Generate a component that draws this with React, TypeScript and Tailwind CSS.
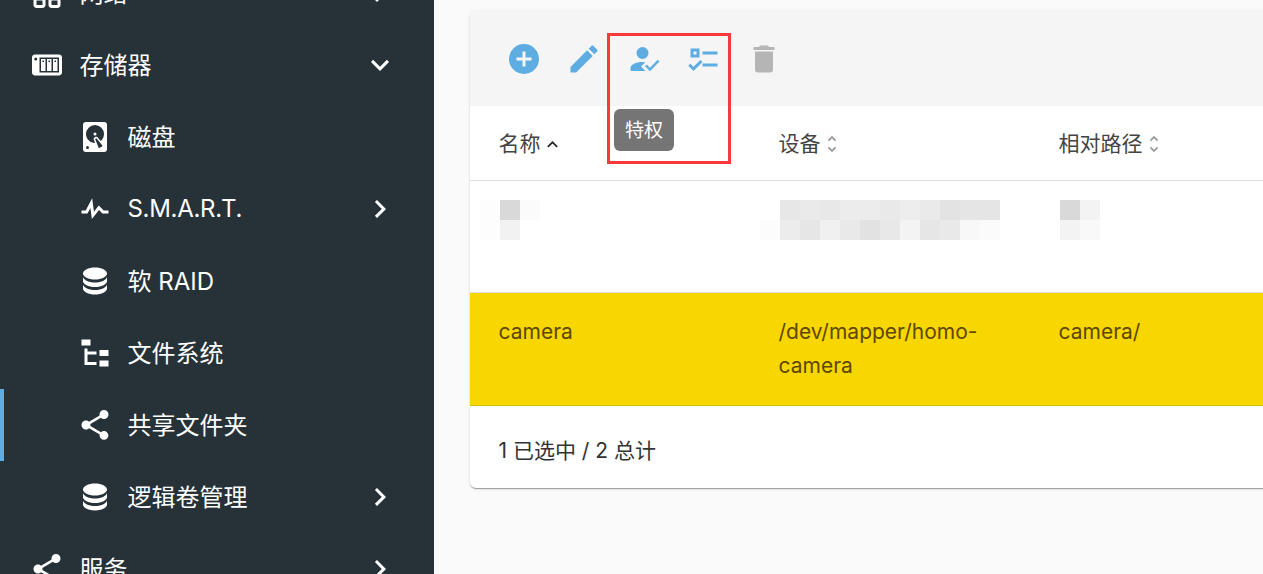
const P = {
  lan: "M10,2C8.89,2 8,2.89 8,4V7C8,8.11 8.89,9 10,9H11V11H2V13H6V15H5C3.89,15 3,15.89 3,17V20C3,21.11 3.89,22 5,22H9C10.11,22 11,21.11 11,20V17C11,15.89 10.11,15 9,15H8V13H16V15H15C13.89,15 13,15.89 13,17V20C13,21.11 13.89,22 15,22H19C20.11,22 21,21.11 21,20V17C21,15.89 20.11,15 19,15H18V13H22V11H13V9H14C15.11,9 16,8.11 16,7V4C16,2.89 15.11,2 14,2H10M10,4H14V7H10V4M5,17H9V20H5V17M15,17H19V20H15V17Z",
  nas: "M4,5C2.89,5 2,5.89 2,7V17C2,18.11 2.89,19 4,19H20C21.11,19 22,18.11 22,17V7C22,5.89 21.11,5 20,5H4M4.5,7A1,1 0 0,1 5.5,8A1,1 0 0,1 4.5,9A1,1 0 0,1 3.5,8A1,1 0 0,1 4.5,7M7,7H20V17H7V7M8,8V16H11V8H8M12,8V16H15V8H12M16,8V16H19V8H16M9,9H10V10H9V9M13,9H14V10H13V9M17,9H18V10H17V9Z",
  disk: "M6,2H18A2,2 0 0,1 20,4V20A2,2 0 0,1 18,22H6A2,2 0 0,1 4,20V4A2,2 0 0,1 6,2M12,4A6,6 0 0,0 6,10C6,13.31 8.69,16 12.1,16L11.22,13.77C10.95,13.29 11.11,12.68 11.59,12.4L12.45,11.9C12.93,11.63 13.54,11.79 13.82,12.27L15.74,14.69C17.12,13.59 18,11.9 18,10A6,6 0 0,0 12,4M12,9A1,1 0 0,1 13,10A1,1 0 0,1 12,11A1,1 0 0,1 11,10A1,1 0 0,1 12,9M7,18A1,1 0 0,0 6,19A1,1 0 0,0 7,20A1,1 0 0,0 8,19A1,1 0 0,0 7,18M12.09,13.27L14.58,19.58L17.17,18.08L12.95,12.77L12.09,13.27Z",
  pulse: "M3,13H5.79L10.1,4.79L11.28,13.75L14.5,9.66L17.83,13H21V15H17L14.67,12.67L9.92,18.73L8.94,11.31L7,15H3V13Z",
  db: "M12,3C7.58,3 4,4.79 4,7C4,9.21 7.58,11 12,11C16.42,11 20,9.21 20,7C20,4.79 16.42,3 12,3M4,9V12C4,14.21 7.58,16 12,16C16.42,16 20,14.21 20,12V9C20,11.21 16.42,13 12,13C7.58,13 4,11.21 4,9M4,14V17C4,19.21 7.58,21 12,21C16.42,21 20,19.21 20,17V14C20,16.21 16.42,18 12,18C7.58,18 4,16.21 4,14Z",
  tree: "M3,3H9V7H3V3M15,10H21V14H15V10M15,17H21V21H15V17M13,13H7V18H13V20H7L5,20V9H7V11H13V13Z",
  share: "M18,16.08C17.24,16.08 16.56,16.38 16.04,16.85L8.91,12.7C8.96,12.47 9,12.24 9,12C9,11.76 8.96,11.53 8.91,11.3L15.96,7.19C16.5,7.69 17.21,8 18,8A3,3 0 0,0 21,5A3,3 0 0,0 18,2A3,3 0 0,0 15,5C15,5.24 15.04,5.47 15.09,5.7L8.04,9.81C7.5,9.31 6.79,9 6,9A3,3 0 0,0 3,12A3,3 0 0,0 6,15C6.79,15 7.5,14.69 8.04,14.19L15.16,18.34C15.11,18.55 15.08,18.77 15.08,19C15.08,20.61 16.39,21.91 18,21.91C19.61,21.91 20.92,20.61 20.92,19A2.92,2.92 0 0,0 18,16.08Z",
  down: "M7.41,8.58L12,13.17L16.59,8.58L18,10L12,16L6,10L7.41,8.58Z",
  right: "M8.59,16.58L13.17,12L8.59,7.41L10,6L16,12L10,18L8.59,16.58Z",
  up: "M7.41,15.41L12,10.83L16.59,15.41L18,14L12,8L6,14L7.41,15.41Z",
  unfold: "M12,18.17L8.83,15L7.41,16.41L12,21L16.59,16.41L15.17,15M12,5.83L15.17,9L16.59,7.59L12,3L7.41,7.59L8.83,9L12,5.83Z",
  plus: "M17,13H13V17H11V13H7V11H11V7H13V11H17M12,2A10,10 0 0,0 2,12A10,10 0 0,0 12,22A10,10 0 0,0 22,12A10,10 0 0,0 12,2Z",
  pencil: "M20.71,7.04C21.1,6.65 21.1,6 20.71,5.63L18.37,3.29C18,2.9 17.35,2.9 16.96,3.29L15.12,5.12L18.87,8.87M3,17.25V21H6.75L17.81,9.93L14.06,6.18L3,17.25Z",
  accountCheck: "M21.2,12.5L22.3,13.6L15.97,20.1L12.7,16.8L13.8,15.7L15.97,17.9L21.2,12.5M10,17L13,20H3V18C3,15.79 6.58,14 11,14L12.89,14.11L10,17M11,4A4,4 0 0,1 15,8A4,4 0 0,1 11,12A4,4 0 0,1 7,8A4,4 0 0,1 11,4Z",
  listChecks: "M3,5H9V11H3V5M5,7V9H7V7H5M11,7H21V9H11V7M11,15H21V17H11V15M5,20L1.5,16.5L2.91,15.09L5,17.17L9.59,12.59L11,14L5,20Z",
  trash: "M19,4H15.5L14.5,3H9.5L8.5,4H5V6H19M6,19A2,2 0 0,0 8,21H16A2,2 0 0,0 18,19V7H6V19Z",
};

function Icon({ d, className }: { d: string; className?: string }) {
  return (
    <svg viewBox="0 0 24 24" className={className} fill="currentColor">
      <path d={d} />
    </svg>
  );
}

function NavItem({ icon, label, chevron, sub, active, tight }: { icon: string; label: string; chevron?: string; sub?: boolean; active?: boolean; tight?: boolean }) {
  return (
    <div
      className={
        "flex h-[72px] items-center pr-[36px] text-[24px] text-white " +
        (active ? "border-l-4 border-[#5dade2] pl-[73px]" : sub ? "pl-[77px]" : "pl-[29px]")
      }
    >
      <Icon d={icon} className="h-9 w-9 shrink-0" />
      <span className={"ml-[14.5px] flex-1 " + (tight ? "tracking-[-0.3px]" : "pt-[2px]")}>{label}</span>
      {chevron && <Icon d={chevron} className="h-9 w-9 shrink-0" />}
    </div>
  );
}

// pixelated (redacted) text in the first row
function Mosaic({ rows, className }: { rows: string[][]; className?: string }) {
  return (
    <svg width={rows[0].length * 20} height={40} className={className}>
      {rows.map((row, y) =>
        row.map((c, x) => <rect key={x} x={x * 20} y={y * 20} width={20} height={20} fill={c} />)
      )}
    </svg>
  );
}

function HeadCell({ label, icon, iconClass }: { label: string; icon: string; iconClass: string }) {
  return (
    <div className="flex items-center">
      <span>{label}</span>
      <Icon d={icon} className={iconClass} />
    </div>
  );
}

const w = "#ffffff";

export default function App() {
  return (
    <div
      className="flex h-[574px] w-[1263px] overflow-hidden bg-[#fafafa]"
      style={{ fontFamily: "Inter, 'Noto Sans CJK SC', sans-serif" }}
    >
      {/* Sidebar */}
      <aside className="h-full w-[434px] shrink-0 overflow-hidden bg-[#263238]">
        <div className="mt-[-43px]">
          <NavItem icon={P.lan} label="网络" chevron={P.right} />
          <NavItem icon={P.nas} label="存储器" chevron={P.down} />
          <NavItem sub icon={P.disk} label="磁盘" />
          <NavItem sub tight icon={P.pulse} label="S.M.A.R.T." chevron={P.right} />
          <NavItem sub icon={P.db} label="软 RAID" />
          <NavItem sub icon={P.tree} label="文件系统" />
          <NavItem sub active icon={P.share} label="共享文件夹" />
          <NavItem sub icon={P.db} label="逻辑卷管理" chevron={P.right} />
          <NavItem icon={P.share} label="服务" chevron={P.right} />
        </div>
      </aside>

      {/* Main */}
      <main className="min-w-0 flex-1 overflow-hidden pl-[36px] pt-[10px]">
        <div className="relative h-[478px] w-[1000px] rounded-[6px] bg-white text-[21px] text-[#333333] shadow-[0_2px_1px_-1px_rgba(0,0,0,0.2),0_1px_1px_0_rgba(0,0,0,0.14),0_1px_3px_0_rgba(0,0,0,0.12)]">
          <div className="flex h-[96px] items-center rounded-t-[6px] bg-[#f5f5f5] pl-[24px] pt-[2px]">
            {[P.plus, P.pencil, P.accountCheck, P.listChecks].map((d) => (
              <div key={d} className="flex w-[60px] justify-center text-[#5dade2]">
                <Icon d={d} className="h-9 w-9" />
              </div>
            ))}
            <div className="flex w-[60px] justify-center text-[#b5b5b5]">
              <Icon d={P.trash} className="h-9 w-9" />
            </div>
          </div>

          <div className="grid h-[75px] grid-cols-[280px_280px_1fr] items-center border-b border-[#e0e0e0] pl-[28.5px] pt-[2px] text-[#444444]">
            <HeadCell label="名称" icon={P.up} iconClass="ml-[1px] h-[21px] w-[21px] text-[#212121]" />
            <HeadCell label="设备" icon={P.unfold} iconClass="h-[22px] w-[22px] text-[#999999]" />
            <HeadCell label="相对路径" icon={P.unfold} iconClass="h-[22px] w-[22px] text-[#999999]" />
          </div>

          <div className="grid h-[112px] grid-cols-[280px_280px_1fr] border-b border-[#e0e0e0] pl-[28.5px] pt-[19px]">
            <Mosaic className="ml-[-18.5px]" rows={[["#fdfdfd", "#d9d9d9", "#fbfbfb"], ["#fdfdfd", "#f2f2f2", w]]} />
            <Mosaic
              className="ml-[-18.5px]"
              rows={[
                [w, "#e7e7e7", "#eaeaea", "#e8e8e8", "#ececec", "#ececec", "#e9e9e9", "#ededed", "#eaeaea", "#e3e3e3", "#e5e5e5", "#e5e5e5"],
                ["#fcfcfc", "#ececec", "#e6e6e6", "#f0f0f0", "#e9e9e9", "#e2e2e2", "#e8e8e8", "#f3f3f3", "#e6e6e6", "#e9e9e9", "#f8f8f8", "#fbfbfb"],
              ]}
            />
            <Mosaic className="ml-[1.5px]" rows={[["#d9d9d9", "#f3f3f3"], ["#f3f3f3", "#f9f9f9"]]} />
          </div>

          <div className="grid h-[113px] grid-cols-[280px_280px_1fr] border-b border-[#dcbe00] bg-[#f8d600] pl-[28.5px] pt-[22px] leading-[34px] text-[#5f4700]">
            <div>camera</div>
            <div className="w-[224px]">/dev/mapper/homo-camera</div>
            <div>camera/</div>
          </div>

          <div className="flex h-[82px] items-center pl-[28.5px] pt-[8px]">1 已选中 / 2 总计</div>

          {/* Annotation + tooltip */}
          <div className="absolute left-[137px] top-[23px] h-[131px] w-[124px] border-[3px] border-[#f83a3a]" />
          <div className="absolute left-[144px] top-[99px] flex h-[42px] w-[60px] items-center justify-center rounded-[6px] bg-[#757575] pt-[3px] text-[19px] text-white">
            特权
          </div>
        </div>
      </main>
    </div>
  );
}
